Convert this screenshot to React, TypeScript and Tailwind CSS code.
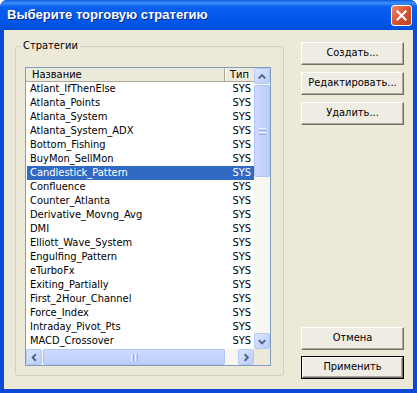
import React from "react";

const ROWS = [
  "Atlant_IfThenElse",
  "Atlanta_Points",
  "Atlanta_System",
  "Atlanta_System_ADX",
  "Bottom_Fishing",
  "BuyMon_SellMon",
  "Candlestick_Pattern",
  "Confluence",
  "Counter_Atlanta",
  "Derivative_Movng_Avg",
  "DMI",
  "Elliott_Wave_System",
  "Engulfing_Pattern",
  "eTurboFx",
  "Exiting_Partially",
  "First_2Hour_Channel",
  "Force_Index",
  "Intraday_Pivot_Pts",
  "MACD_Crossover",
];

const SELECTED = "Candlestick_Pattern";

function Chevron({ dir }: { dir: "up" | "down" | "left" | "right" }) {
  const pts = {
    up: "4,9.5 7.5,6 11,9.5",
    down: "4,6 7.5,9.5 11,6",
    left: "9.5,4 6,7.5 9.5,11",
    right: "6,4 9.5,7.5 6,11",
  }[dir];
  return (
    <svg width="15" height="15" viewBox="0 0 15 15">
      <polyline points={pts} fill="none" stroke="#4D6185" strokeWidth="2" />
    </svg>
  );
}

function ArrowBtn({ dir }: { dir: "up" | "down" | "left" | "right" }) {
  return (
    <div className="w-[16px] h-[16px] flex items-center justify-center rounded-[2px] border border-[#B5C8F3] bg-[linear-gradient(135deg,#DCE6FD,#B9CDFA)]">
      <Chevron dir={dir} />
    </div>
  );
}

function Button({ label, isDefault }: { label: string; isDefault?: boolean }) {
  return (
    <div
      className={
        "h-[23px] w-full flex " + (isDefault ? "border border-black" : "")
      }
    >
      <div className="flex-1 flex items-center justify-center text-[11px] text-black bg-[#EFEDE3] border border-t-white border-l-white border-b-[#716F64] border-r-[#716F64] shadow-[inset_-1px_-1px_0_#ACA899]">
        {label}
      </div>
    </div>
  );
}

export default function App() {
  return (
    <div className="w-[417px] h-[393px] flex flex-col bg-[#0B48D6] rounded-t-[7px] overflow-hidden font-['DejaVu_Sans_Condensed','Liberation_Sans',sans-serif]">
      {/* title bar */}
      <div className="h-[30px] flex items-center justify-between pl-[7px] pr-[5px] bg-[linear-gradient(to_bottom,#0A5AE0,#3D8FF8_10%,#0A61F0_22%,#0056E8_70%,#004FD8)]">
        <span className="text-white font-bold text-[13px] font-['Liberation_Sans',sans-serif] [text-shadow:1px_1px_0_#0A2A8A]">
          Выберите торговую стратегию
        </span>
        <div className="w-[21px] h-[21px] rounded-[3px] border border-white flex items-center justify-center bg-[linear-gradient(135deg,#EE8A6A,#D9532E_50%,#C23E1C)]">
          <svg width="11" height="11" viewBox="0 0 11 11">
            <path d="M1.5 1.5 L9.5 9.5 M9.5 1.5 L1.5 9.5" stroke="white" strokeWidth="2.2" strokeLinecap="square" />
          </svg>
        </div>
      </div>

      {/* client area */}
      <div className="flex-1 mx-[4px] mb-[4px] bg-[#ECE9D8] flex items-start pt-[12px] pl-[11px] gap-[17px]">
        {/* group box */}
        <div className="relative mt-[4px] w-[269px] h-[330px] border border-[#D0D0BF] rounded-[3px] pl-[9px] pt-[20px]">
          <span className="absolute left-[5px] top-[-8px] px-[2px] bg-[#ECE9D8] text-[11px] leading-[14px] text-black">
            Стратегии
          </span>

          {/* list view */}
          <div className="w-[246px] h-[299px] border border-[#7F9DB9] bg-white flex flex-col">
            <div className="flex h-[281px]">
              <div className="w-[228px] flex flex-col">
                <div className="h-[14px] flex text-[11px] leading-[13px] text-black bg-[#EBEADB] border-b border-[#ACA899]">
                  <div className="w-[199px] pl-[6px] border-r border-[#ACA899]">Название</div>
                  <div className="flex-1 pl-[4px] border-l border-white">Тип</div>
                </div>
                <div className="flex flex-col">
                  {ROWS.map((r) => {
                    const sel = r === SELECTED;
                    return (
                      <div
                        key={r}
                        className={
                          "h-[14px] ml-[1px] flex items-center text-[11px] leading-[14px] " +
                          (sel ? "bg-[#316AC5] text-white" : "text-black")
                        }
                      >
                        <span className="w-[198px] pl-[3px] whitespace-nowrap overflow-hidden">{r}</span>
                        <span className="flex-1 text-right pr-[3px]">SYS</span>
                      </div>
                    );
                  })}
                </div>
              </div>

              {/* vertical scrollbar */}
              <div className="w-[16px] flex flex-col bg-[#F7F6F1]">
                <ArrowBtn dir="up" />
                <div className="mt-[1px] h-[92px] rounded-[2px] border border-[#B0C5F4] bg-[linear-gradient(to_right,#CDDAFC,#BBCEFA)] flex flex-col items-center justify-center gap-[1px]">
                  <div className="w-[7px] h-[1px] bg-[#EEF3FE]" />
                  <div className="w-[7px] h-[1px] bg-[#8FB0F0]" />
                  <div className="w-[7px] h-[1px] bg-[#EEF3FE]" />
                  <div className="w-[7px] h-[1px] bg-[#8FB0F0]" />
                </div>
                <div className="flex-1" />
                <ArrowBtn dir="down" />
              </div>
            </div>

            {/* horizontal scrollbar */}
            <div className="h-[16px] flex bg-[#F7F6F1]">
              <ArrowBtn dir="left" />
              <div className="ml-[1px] w-[182px] rounded-[2px] border border-[#B0C5F4] bg-[linear-gradient(to_bottom,#CDDAFC,#BBCEFA)] flex items-center justify-center gap-[1px]">
                <div className="w-[1px] h-[7px] bg-[#EEF3FE]" />
                <div className="w-[1px] h-[7px] bg-[#8FB0F0]" />
                <div className="w-[1px] h-[7px] bg-[#EEF3FE]" />
                <div className="w-[1px] h-[7px] bg-[#8FB0F0]" />
              </div>
              <div className="flex-1" />
              <ArrowBtn dir="right" />
              <div className="w-[16px] bg-[#ECE9D8]" />
            </div>
          </div>
        </div>

        {/* buttons */}
        <div className="w-[103px] h-[337px] flex flex-col justify-between">
          <div className="flex flex-col gap-[7px]">
            <Button label="Создать..." />
            <Button label="Редактировать..." />
            <Button label="Удалить..." />
          </div>
          <div className="flex flex-col gap-[6px]">
            <Button label="Отмена" />
            <Button label="Применить" isDefault />
          </div>
        </div>
      </div>
    </div>
  );
}
